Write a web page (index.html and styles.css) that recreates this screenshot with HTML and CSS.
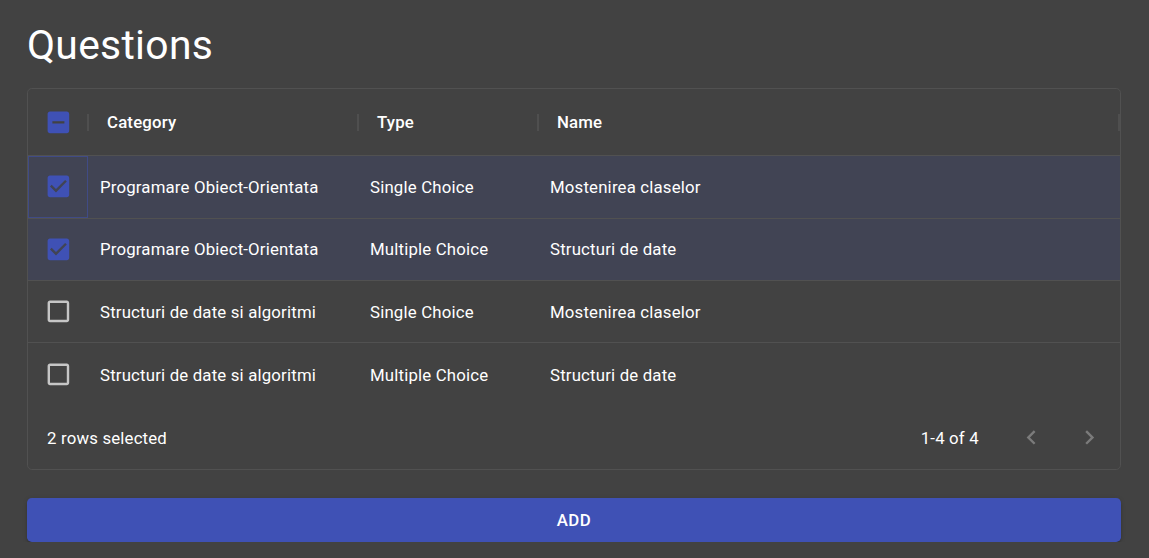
FILE: index.html
```html
<!DOCTYPE html>
<html lang="en">
<head>
<meta charset="utf-8">
<title>Questions</title>
<link rel="stylesheet" href="styles.css">
</head>
<body>
<div class="page">
  <h1 class="title">Questions</h1>
  <div class="grid">
    <div class="row header">
      <div class="cell check-cell">
        <svg class="cb cb-on" viewBox="0 0 24 24"><path d="M19 3H5c-1.1 0-2 .9-2 2v14c0 1.1.9 2 2 2h14c1.1 0 2-.9 2-2V5c0-1.1-.9-2-2-2zm-2 10H7v-2h10v2z"/></svg>
      </div>
      <div class="hcell"><span class="sep"></span><span class="htext">Category</span></div>
      <div class="hcell"><span class="sep"></span><span class="htext">Type</span></div>
      <div class="hcell"><span class="sep"></span><span class="htext">Name</span><span class="spacer"></span><span class="sep sep-end"></span></div>
    </div>
    <div class="row body selected">
      <div class="cell check-cell focused">
        <svg class="cb cb-on" viewBox="0 0 24 24"><path fill-rule="evenodd" d="M19 3H5c-1.11 0-2 .9-2 2v14c0 1.1.89 2 2 2h14c1.11 0 2-.9 2-2V5c0-1.1-.89-2-2-2zm-9 14l-5-5 1.41-1.41L10 14.17l7.59-7.59L19 8l-9 9z"/></svg>
      </div>
      <div class="cell">Programare Obiect-Orientata</div>
      <div class="cell">Single Choice</div>
      <div class="cell">Mostenirea claselor</div>
    </div>
    <div class="row body selected">
      <div class="cell check-cell">
        <svg class="cb cb-on" viewBox="0 0 24 24"><path fill-rule="evenodd" d="M19 3H5c-1.11 0-2 .9-2 2v14c0 1.1.89 2 2 2h14c1.11 0 2-.9 2-2V5c0-1.1-.89-2-2-2zm-9 14l-5-5 1.41-1.41L10 14.17l7.59-7.59L19 8l-9 9z"/></svg>
      </div>
      <div class="cell">Programare Obiect-Orientata</div>
      <div class="cell">Multiple Choice</div>
      <div class="cell">Structuri de date</div>
    </div>
    <div class="row body">
      <div class="cell check-cell">
        <svg class="cb cb-off" viewBox="0 0 24 24"><path d="M19 5v14H5V5h14m0-2H5c-1.1 0-2 .9-2 2v14c0 1.1.9 2 2 2h14c1.1 0 2-.9 2-2V5c0-1.1-.9-2-2-2z"/></svg>
      </div>
      <div class="cell">Structuri de date si algoritmi</div>
      <div class="cell">Single Choice</div>
      <div class="cell">Mostenirea claselor</div>
    </div>
    <div class="row body last">
      <div class="cell check-cell">
        <svg class="cb cb-off" viewBox="0 0 24 24"><path d="M19 5v14H5V5h14m0-2H5c-1.1 0-2 .9-2 2v14c0 1.1.9 2 2 2h14c1.1 0 2-.9 2-2V5c0-1.1-.9-2-2-2z"/></svg>
      </div>
      <div class="cell">Structuri de date si algoritmi</div>
      <div class="cell">Multiple Choice</div>
      <div class="cell">Structuri de date</div>
    </div>
    <div class="footer">
      <span class="selcount">2 rows selected</span>
      <span class="spacer"></span>
      <span class="pagetext">1-4 of 4</span>
      <span class="pagebtn first">
        <svg class="chev" viewBox="0 0 24 24"><path d="M15.41 16.59L10.83 12l4.58-4.59L14 6l-6 6 6 6 1.41-1.41z"/></svg>
      </span>
      <span class="pagebtn">
        <svg class="chev" viewBox="0 0 24 24"><path d="M8.59 16.59L13.17 12 8.59 7.41 10 6l6 6-6 6-1.41-1.41z"/></svg>
      </span>
    </div>
  </div>
  <button class="add">ADD</button>
</div>
</body>
</html>
```
FILE: styles.css
```css
* { box-sizing: border-box; }
html, body {
  margin: 0;
  padding: 0;
  background: #424242;
  color: #fff;
  font-family: Roboto, "Liberation Sans", sans-serif;
}
.page {
  padding: 20px 28px 0 27px;
}
.title {
  margin: 0 0 17.6px 0;
  font-size: 40.8px;
  font-weight: 400;
  line-height: 1.235;
  letter-spacing: 0.00735em;
}
.grid {
  border: 1px solid #515151;
  border-radius: 4.8px;
  background: #424242;
}
.row {
  display: grid;
  grid-template-columns: 60px 270px 180px 1fr;
  border-bottom: 1px solid #515151;
}
.row.header { height: 67.2px; }
.row.body { height: 62.4px; font-size: 16.8px; }
.row.last { border-bottom: none; }
.row.selected { background: rgba(63, 81, 181, 0.16); }
.cell {
  display: flex;
  align-items: center;
  padding: 0 12px;
  white-space: nowrap;
  overflow: hidden;
  letter-spacing: 0.01071em;
}
.check-cell {
  justify-content: center;
  padding: 0;
}
.check-cell.focused {
  outline: 1px solid rgba(63, 81, 181, 0.5);
  outline-offset: -1px;
}
.cb { width: 28.8px; height: 28.8px; display: block; }
.cb-on { fill: #3f51b5; }
.cb-off { fill: rgba(255, 255, 255, 0.7); }
.hcell {
  display: flex;
  align-items: center;
  font-size: 16.8px;
  font-weight: 500;
  letter-spacing: 0.01071em;
}
.sep {
  width: 2px;
  height: 17px;
  margin-left: -1px;
  background: #4f4f4f;
  flex: none;
}
.sep-end { margin-left: 0; margin-right: 0; }
.htext { margin-left: 18px; }
.spacer { flex: 1; }
.footer {
  height: 63.6px;
  display: flex;
  align-items: center;
  padding: 0 2px 0 19px;
  font-size: 16.8px;
  letter-spacing: 0.01071em;
}
.pagetext { margin-right: 24px; }
.pagebtn {
  width: 57.6px;
  height: 57.6px;
  display: flex;
  align-items: center;
  justify-content: center;
}
.chev { width: 28.8px; height: 28.8px; fill: rgba(255, 255, 255, 0.3); }
.add {
  display: block;
  width: 100%;
  margin-top: 28px;
  height: 43.8px;
  border: none;
  border-radius: 4.8px;
  background: #3f51b5;
  color: #fff;
  font-family: Roboto, "Liberation Sans", sans-serif;
  font-size: 16.8px;
  font-weight: 500;
  letter-spacing: 0.02857em;
  box-shadow: 0px 3px 1px -2px rgba(0,0,0,0.2), 0px 2px 2px 0px rgba(0,0,0,0.14), 0px 1px 5px 0px rgba(0,0,0,0.12);
}
```
